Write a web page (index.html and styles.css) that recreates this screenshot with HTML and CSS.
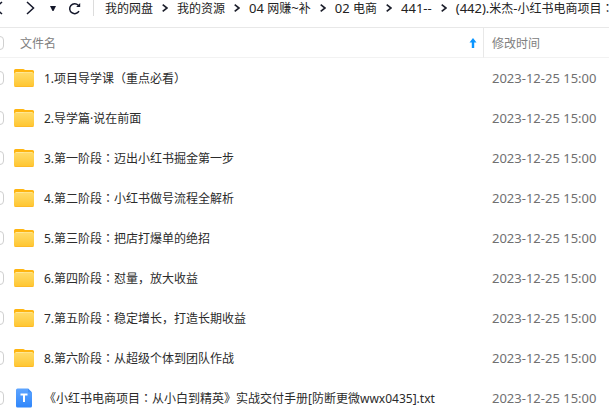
FILE: index.html
```
<!DOCTYPE html>
<html lang="zh-CN">
<head>
  <meta charset="UTF-8">
  <meta name="viewport" content="width=device-width, initial-scale=1.0">
  <title>我的网盘</title>
  <link rel="stylesheet" href="styles.css">
</head>
<body>
  <!-- shared icons -->
  <svg class="sprite" aria-hidden="true">
    <defs>
      <linearGradient id="folderFront" x1="0" y1="0" x2="0" y2="1">
        <stop offset="0" stop-color="#ffdc6a"/>
        <stop offset="1" stop-color="#ffc52e"/>
      </linearGradient>
      <linearGradient id="fileBody" x1="0" y1="0" x2="0" y2="1">
        <stop offset="0" stop-color="#5ea5ff"/>
        <stop offset="1" stop-color="#2f86fb"/>
      </linearGradient>
    </defs>
    <symbol id="folder" viewBox="0 0 20 18">
      <path d="M0 1.5Q0 0 1.5 0H9Q10 0 11 1H18.5Q20 1 20 2.5V10H0Z" fill="#ffb50f"/>
      <path d="M1.5 3H18.5V8H1.5Z" fill="#ffecab"/>
      <path d="M0 5Q0 3.7 1.5 3.7H8Q9 3.7 10 3.5H18.5Q20 3.5 20 5V16Q20 18 18 18H2Q0 18 0 16Z" fill="url(#folderFront)"/>
      <path d="M0 15.5Q0 18 2 18H18Q20 18 20 15.5Q20 17 18 17H2Q0 17 0 15.5Z" fill="#fdb928"/>
    </symbol>
    <symbol id="chevron" viewBox="0 0 6 8">
      <path d="M0.7 0.7L5 4L0.7 7.3" fill="none" stroke="#1c1f2b" stroke-width="1.7"/>
    </symbol>
  </svg>

  <nav class="toolbar">
    <div class="nav-buttons">
      <button type="button" class="back-btn" aria-label="后退">
        <svg width="9" height="14" viewBox="0 0 9 14"><path d="M8 1L1.5 7L8 13" fill="none" stroke="#14172a" stroke-width="1.5"/></svg>
      </button>
      <button type="button" class="forward-btn" aria-label="前进">
        <svg width="9" height="14" viewBox="0 0 9 14"><path d="M1 1L7.5 7L1 13" fill="none" stroke="#14172a" stroke-width="1.5"/></svg>
      </button>
      <button type="button" class="history-btn" aria-label="历史">
        <svg width="6" height="5" viewBox="0 0 6 5"><path d="M0 0H6L3.5 5H2.5Z" fill="#14172a"/></svg>
      </button>
      <button type="button" class="refresh-btn" aria-label="刷新">
        <svg width="13" height="13" viewBox="0 0 13 13"><path d="M11 9.2A5 5 0 1 1 10.3 3.2" fill="none" stroke="#14172a" stroke-width="1.5"/><path d="M12.2 1V5H8.2Z" fill="#14172a"/></svg>
      </button>
    </div>
    <div class="breadcrumb">
      <a href="#">我的网盘</a>
      <svg class="chevron"><use href="#chevron"/></svg>
      <a href="#">我的资源</a>
      <svg class="chevron"><use href="#chevron"/></svg>
      <a href="#"><span class="latin">04 </span>网赚<span class="latin">~</span>补</a>
      <svg class="chevron"><use href="#chevron"/></svg>
      <a href="#"><span class="latin">02 </span>电商</a>
      <svg class="chevron"><use href="#chevron"/></svg>
      <a href="#"><span class="latin">441--</span></a>
      <svg class="chevron"><use href="#chevron"/></svg>
      <a href="#"><span class="latin">(442).</span>米杰<span class="latin">-</span>小红书电商项目<span class="colon" lang="zh-TW">：</span></a>
    </div>
  </nav>

  <table class="file-table">
    <thead>
      <tr>
        <th class="check-col"><input type="checkbox" aria-label="全选"></th>
        <th class="name-col">
          <div class="sort-head">
            <span>文件名</span>
            <svg width="8" height="10" viewBox="0 0 8 10"><path d="M4 0L7.5 4.5H5.2V10H2.8V4.5H0.5Z" fill="#0a95ff"/></svg>
          </div>
        </th>
        <th class="time-col">修改时间</th>
      </tr>
    </thead>
    <tbody>
      <tr>
        <td><input type="checkbox" aria-label="选择 1"></td>
        <td><div class="file"><svg class="icon"><use href="#folder"/></svg><span class="name">1.项目导学课（重点必看）</span></div></td>
        <td class="time">2023-12-25 15:00</td>
      </tr>
      <tr>
        <td><input type="checkbox" aria-label="选择 2"></td>
        <td><div class="file"><svg class="icon"><use href="#folder"/></svg><span class="name">2.导学篇·说在前面</span></div></td>
        <td class="time">2023-12-25 15:00</td>
      </tr>
      <tr>
        <td><input type="checkbox" aria-label="选择 3"></td>
        <td><div class="file"><svg class="icon"><use href="#folder"/></svg><span class="name">3.第一阶段<span class="colon" lang="zh-TW">：</span>迈出小红书掘金第一步</span></div></td>
        <td class="time">2023-12-25 15:00</td>
      </tr>
      <tr>
        <td><input type="checkbox" aria-label="选择 4"></td>
        <td><div class="file"><svg class="icon"><use href="#folder"/></svg><span class="name">4.第二阶段<span class="colon" lang="zh-TW">：</span>小红书做号流程全解析</span></div></td>
        <td class="time">2023-12-25 15:00</td>
      </tr>
      <tr>
        <td><input type="checkbox" aria-label="选择 5"></td>
        <td><div class="file"><svg class="icon"><use href="#folder"/></svg><span class="name">5.第三阶段<span class="colon" lang="zh-TW">：</span>把店打爆单的绝招</span></div></td>
        <td class="time">2023-12-25 15:00</td>
      </tr>
      <tr>
        <td><input type="checkbox" aria-label="选择 6"></td>
        <td><div class="file"><svg class="icon"><use href="#folder"/></svg><span class="name">6.第四阶段<span class="colon" lang="zh-TW">：</span>怼量，放大收益</span></div></td>
        <td class="time">2023-12-25 15:00</td>
      </tr>
      <tr>
        <td><input type="checkbox" aria-label="选择 7"></td>
        <td><div class="file"><svg class="icon"><use href="#folder"/></svg><span class="name">7.第五阶段<span class="colon" lang="zh-TW">：</span>稳定增长，打造长期收益</span></div></td>
        <td class="time">2023-12-25 15:00</td>
      </tr>
      <tr>
        <td><input type="checkbox" aria-label="选择 8"></td>
        <td><div class="file"><svg class="icon"><use href="#folder"/></svg><span class="name">8.第六阶段<span class="colon" lang="zh-TW">：</span>从超级个体到团队作战</span></div></td>
        <td class="time">2023-12-25 15:00</td>
      </tr>
      <tr>
        <td><input type="checkbox" aria-label="选择 9"></td>
        <td>
          <div class="file">
            <svg class="icon text-icon" viewBox="0 0 20 20">
              <path d="M2 2Q2 0.5 3.5 0.5H14L18 4.5V18Q18 19.5 16.5 19.5H3.5Q2 19.5 2 18Z" fill="url(#fileBody)"/>
              <path d="M14 0.5L18 4.5H15Q14 4.5 14 3.5Z" fill="#3f8ff8"/>
              <path d="M6.5 6.5H13.5M10 6.5V14" fill="none" stroke="#fff" stroke-width="2"/>
            </svg>
            <span class="name">《小红书电商项目<span class="colon" lang="zh-TW">：</span>从小白到精英》实战交付手册[防断更微wwx0435].txt</span>
          </div>
        </td>
        <td class="time">2023-12-25 15:00</td>
      </tr>
    </tbody>
  </table>
</body>
</html>
```
FILE: styles.css
```
* {
  margin: 0;
  padding: 0;
  box-sizing: border-box;
}
body {
  height: 100vh;
  overflow: hidden;
  background: #fff;
  color: #2b2b2b;
  font-family: "Noto Sans", "Noto Sans CJK SC", sans-serif;
  font-size: 12px;
  line-height: 16px;
}
.sprite {
  display: block;
  width: 0;
  height: 0;
}
.toolbar {
  display: flex;
  height: 28px;
  padding-bottom: 11px;
  border-bottom: 1px solid #e8e8e8;
  white-space: nowrap;
}
.nav-buttons {
  display: flex;
  flex: none;
  align-items: center;
  margin-left: -6px;
  padding-right: 12px;
  border-right: 1px solid #dcdcdc;
}
.nav-buttons button {
  display: flex;
  border: none;
  background: none;
  cursor: pointer;
}
.forward-btn {
  margin-left: 23px;
}
.history-btn {
  margin-left: 15px;
}
.refresh-btn {
  margin-left: 12px;
}
.breadcrumb {
  display: flex;
  align-items: center;
  gap: 9px;
  padding-left: 11px;
}
.breadcrumb a {
  padding-top: 1px;
  color: #222;
  text-decoration: none;
}
.latin {
  font-size: 13px;
  white-space: pre;
}
/* full-width colon sits in the middle of its box */
.colon {
  font-family: "Noto Sans", "Noto Sans CJK TC", sans-serif;
}
.chevron {
  flex: none;
  width: 6px;
  height: 8px;
}
/* the checkbox column runs under the left edge */
.file-table {
  width: calc(100% + 10px);
  margin-left: -10px;
  border-collapse: separate;
  border-spacing: 0;
  table-layout: fixed;
  white-space: nowrap;
}
th {
  height: 30px;
  border-bottom: 1px solid #f2f2f2;
  color: #808080;
  font-weight: normal;
  text-align: left;
}
td {
  height: 40px;
}
.check-col {
  width: 23px;
}
.time-col {
  width: 126px;
  padding-top: 2px;
  padding-left: 8px;
  border-left: 1px solid #e8e8e8;
}
.sort-head {
  display: flex;
  align-items: center;
  justify-content: space-between;
  padding: 0 6px 0 7px;
}
.sort-head span,
.name {
  padding-top: 2px;
}
input[type="checkbox"] {
  display: block;
  width: 14px;
  height: 14px;
  border: 1px solid #d0d0d0;
  border-radius: 4px;
  background: #fff;
  appearance: none;
}
.file {
  display: flex;
  align-items: center;
  gap: 10px;
}
.icon {
  flex: none;
  width: 20px;
  height: 18px;
  margin-left: 1px;
}
.text-icon {
  height: 20px;
}
.time {
  padding-left: 9px;
  color: #707070;
  font-size: 13px;
}
```
